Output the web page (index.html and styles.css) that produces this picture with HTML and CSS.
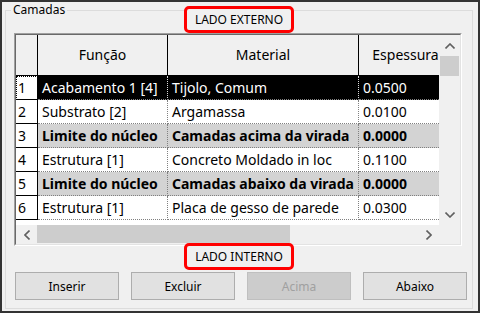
FILE: index.html
```html
<!DOCTYPE html>
<html>
<head>
    <title>Camadas</title>
    <link rel="stylesheet" href="styles.css">
</head>
<body>
    <div class="window">
        <fieldset class="group">
            <legend>Camadas</legend>

            <div class="side side-top"><span class="side-label">LADO EXTERNO</span></div>

            <div class="grid-frame">
                <div class="grid-inner">
                    <div class="viewport">
                        <div class="row head">
                            <div class="cell num"></div>
                            <div class="cell">Função</div>
                            <div class="cell">Material</div>
                            <div class="cell">Espessura</div>
                        </div>
                        <div class="row sel">
                            <div class="cell num">1</div>
                            <div class="cell">Acabamento 1 [4]</div>
                            <div class="cell">Tijolo, Comum</div>
                            <div class="cell">0.0500</div>
                        </div>
                        <div class="row">
                            <div class="cell num">2</div>
                            <div class="cell">Substrato [2]</div>
                            <div class="cell">Argamassa</div>
                            <div class="cell">0.0100</div>
                        </div>
                        <div class="row core">
                            <div class="cell num">3</div>
                            <div class="cell">Limite do núcleo</div>
                            <div class="cell">Camadas acima da virada</div>
                            <div class="cell">0.0000</div>
                        </div>
                        <div class="row">
                            <div class="cell num">4</div>
                            <div class="cell">Estrutura [1]</div>
                            <div class="cell">Concreto Moldado in loc</div>
                            <div class="cell">0.1100</div>
                        </div>
                        <div class="row core">
                            <div class="cell num">5</div>
                            <div class="cell">Limite do núcleo</div>
                            <div class="cell">Camadas abaixo da virada</div>
                            <div class="cell">0.0000</div>
                        </div>
                        <div class="row">
                            <div class="cell num">6</div>
                            <div class="cell">Estrutura [1]</div>
                            <div class="cell">Placa de gesso de parede</div>
                            <div class="cell">0.0300</div>
                        </div>
                    </div>

                    <div class="vscroll">
                        <div class="arrow">
                            <svg width="10" height="6" viewBox="0 0 10 6"><polyline points="0.5,5.5 5,1 9.5,5.5" fill="none" stroke="#606060" stroke-width="1.6"/></svg>
                        </div>
                        <div class="thumb"></div>
                        <div class="track"></div>
                        <div class="arrow">
                            <svg width="10" height="6" viewBox="0 0 10 6"><polyline points="0.5,0.5 5,5 9.5,0.5" fill="none" stroke="#606060" stroke-width="1.6"/></svg>
                        </div>
                    </div>

                    <div class="hscroll">
                        <div class="arrow">
                            <svg width="6" height="10" viewBox="0 0 6 10"><polyline points="5.5,0.5 1,5 5.5,9.5" fill="none" stroke="#606060" stroke-width="1.6"/></svg>
                        </div>
                        <div class="thumb"></div>
                        <div class="track"></div>
                        <div class="arrow">
                            <svg width="6" height="10" viewBox="0 0 6 10"><polyline points="0.5,0.5 5,5 0.5,9.5" fill="none" stroke="#606060" stroke-width="1.6"/></svg>
                        </div>
                    </div>

                    <div class="corner"></div>
                </div>
            </div>

            <div class="side side-bottom"><span class="side-label">LADO INTERNO</span></div>

            <div class="buttons">
                <button>Inserir</button>
                <button>Excluir</button>
                <button disabled>Acima</button>
                <button>Abaixo</button>
            </div>
        </fieldset>
    </div>
</body>
</html>
```

FILE: styles.css
```css
body {
    margin: 0;
    font-family: "Noto Sans", "Open Sans", sans-serif;
    color: #000;
}

.window {
    width: 480px;
    height: 313px;
    box-sizing: border-box;
    border: 2px solid #333;
    background-color: #f0f0f0;
    display: flex;
    flex-direction: column;
}

.group {
    flex: 1;
    min-width: 0;
    margin: 0 5px 2px 3px;
    padding: 0;
    border: 1px solid #dcdcdc;
}

.group legend {
    font-size: 12px;
    line-height: 16px;
    padding: 0 2px;
    margin-left: 5px;
}

/* red notes */
.side {
    display: flex;
    justify-content: center;
    position: relative;
}

.side-top {
    margin-top: -12px;
}

.side-bottom {
    margin-top: -3px;
}

.side-label {
    width: 110px;
    height: 27px;
    box-sizing: border-box;
    border: 3px solid #ff0000;
    border-radius: 5px;
    background-color: #f0f0f0;
    font-size: 12px;
    display: flex;
    align-items: center;
    justify-content: center;
}

/* grid */
.grid-frame {
    margin: 0 10px 0 8px;
    height: 213px;
    box-sizing: border-box;
    border: 1px solid;
    border-color: #a0a0a0 #fff #fff #a0a0a0;
}

.grid-inner {
    height: 100%;
    box-sizing: border-box;
    border: 1px solid;
    border-color: #696969 #e3e3e3 #e3e3e3 #696969;
    display: grid;
    grid-template-columns: 1fr 21px;
    grid-template-rows: 1fr 19px;
}

.viewport {
    overflow: hidden;
    background-color: #fff;
}

.row {
    display: grid;
    grid-template-columns: 22px 130px 191px 94px;
    height: 24px;
    font-size: 14px;
}

.cell {
    box-sizing: border-box;
    padding: 0 4px;
    line-height: 23px;
    white-space: nowrap;
    overflow: hidden;
    border-right: 1px dotted #808080;
    border-bottom: 1px dotted #808080;
}

.cell.num {
    padding: 0 2px;
    border-right: 1px solid #000;
    border-bottom: 1px solid #000;
    background-color: #fff;
}

.head {
    height: 41px;
}

.head .cell {
    background-color: #f0f0f0;
    text-align: center;
    line-height: 40px;
    border-right: 1px solid #000;
    border-bottom: 1px solid #000;
}

.sel .cell {
    background-color: #000;
    color: #fff;
    border-right-color: #ddd;
}

.sel .cell.num {
    background-color: #fff;
    color: #000;
    border-right: 1px solid #000;
    outline: 1px dotted #000;
    outline-offset: -1px;
}

.core .cell {
    background-color: #d3d3d3;
    font-weight: bold;
}

.core .cell.num {
    background-color: #fff;
    font-weight: normal;
}

/* scrollbars */
.vscroll {
    display: flex;
    flex-direction: column;
    background-color: #f0f0f0;
}

.vscroll .arrow {
    height: 21px;
}

.vscroll .thumb {
    height: 20px;
    margin: 0 1px;
    background-color: #cdcdcd;
}

.hscroll {
    display: flex;
    background-color: #f0f0f0;
}

.hscroll .arrow {
    width: 21px;
}

.hscroll .thumb {
    width: 253px;
    margin-bottom: 1px;
    background-color: #cdcdcd;
}

.track {
    flex: 1;
}

.arrow {
    display: flex;
    align-items: center;
    justify-content: center;
}

.arrow svg {
    display: block;
}

.corner {
    background-color: #f0f0f0;
}

/* buttons */
.buttons {
    margin: 2px 5px 0 9px;
    display: flex;
    justify-content: space-between;
}

button {
    width: 104px;
    height: 28px;
    border: 1px solid #adadad;
    background-color: #e1e1e1;
    font-family: "Noto Sans", "Open Sans", sans-serif;
    font-size: 12px;
    color: #000;
    padding: 0;
}

button:disabled {
    background-color: #cccccc;
    border-color: #bfbfbf;
    color: #a0a0a0;
}
```
